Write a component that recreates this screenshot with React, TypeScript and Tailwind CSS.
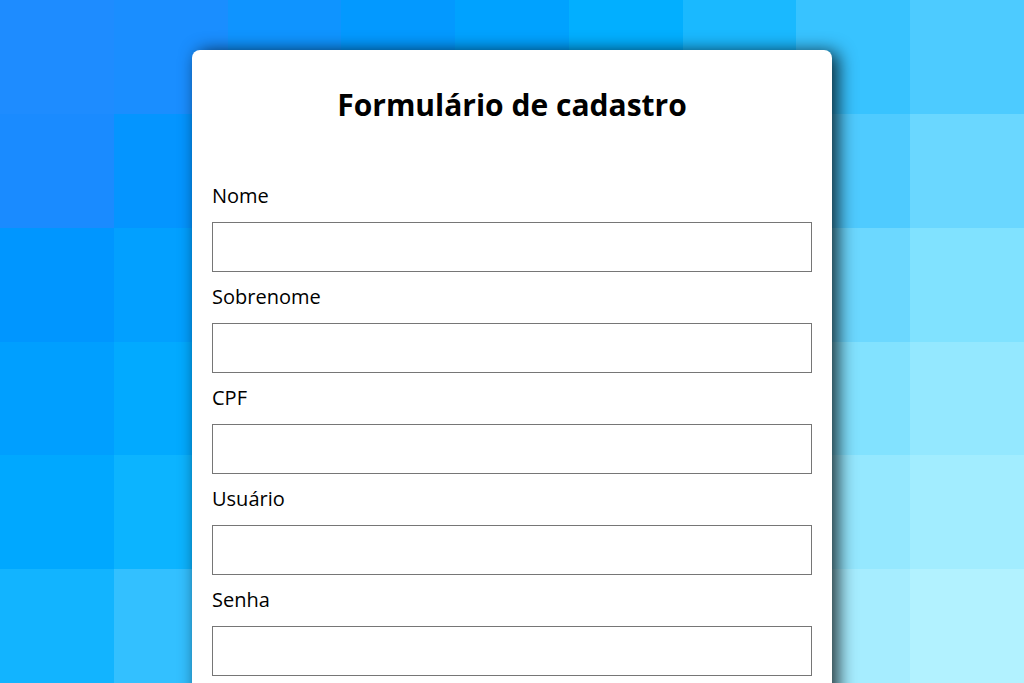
import { useState } from "react";

// background tiles, row by row (9 x 6)
const tiles = [
  "bg-[#1e8cff]", "bg-[#1a8eff]", "bg-[#0f94ff]", "bg-[#0399ff]", "bg-[#00a2ff]", "bg-[#02afff]", "bg-[#1ab9ff]", "bg-[#38c3ff]", "bg-[#4dcbff]",
  "bg-[#1a8bff]", "bg-[#0495ff]", "bg-[#019dff]", "bg-[#00a6ff]", "bg-[#06b1ff]", "bg-[#22bcff]", "bg-[#3bc5ff]", "bg-[#4fcbff]", "bg-[#6ad7ff]",
  "bg-[#0096ff]", "bg-[#02a0ff]", "bg-[#00a6ff]", "bg-[#06b1ff]", "bg-[#22bcff]", "bg-[#3bc5ff]", "bg-[#4ecbff]", "bg-[#6cd8ff]", "bg-[#80e2ff]",
  "bg-[#009fff]", "bg-[#02aaff]", "bg-[#06b1ff]", "bg-[#22bcff]", "bg-[#3bc5ff]", "bg-[#4ecbff]", "bg-[#6bd7ff]", "bg-[#82e2ff]", "bg-[#94e8ff]",
  "bg-[#00a8ff]", "bg-[#0cb4ff]", "bg-[#22bcff]", "bg-[#3bc5ff]", "bg-[#4ecbff]", "bg-[#6bd7ff]", "bg-[#81e2ff]", "bg-[#95e8ff]", "bg-[#a2edff]",
  "bg-[#12b4ff]", "bg-[#33c0ff]", "bg-[#3bc5ff]", "bg-[#4ecbff]", "bg-[#6bd7ff]", "bg-[#81e2ff]", "bg-[#94e8ff]", "bg-[#a6edff]", "bg-[#b2f2ff]",
];

const fields = [
  { id: "nome", label: "Nome", type: "text" },
  { id: "sobrenome", label: "Sobrenome", type: "text" },
  { id: "cpf", label: "CPF", type: "text" },
  { id: "usuario", label: "Usuário", type: "text" },
  { id: "senha", label: "Senha", type: "password" },
];

export default function App() {
  const [values, setValues] = useState<Record<string, string>>({});

  return (
    <main className="relative h-[683px] w-full overflow-hidden font-['Open_Sans',sans-serif] text-black">
      <div className="absolute inset-0 grid grid-cols-9 grid-rows-6">
        {tiles.map((t, i) => (
          <div key={i} className={t} />
        ))}
      </div>

      <div className="relative mx-auto mt-[50px] w-[640px] rounded-lg bg-white px-5 pt-[33px] pb-10 shadow-[6px_2px_18px_rgba(0,0,0,0.8)]">
        <h1 className="text-center text-[30px] font-bold leading-[44px]">Formulário de cadastro</h1>

        <form className="mt-[54px] flex flex-col gap-[10px]" onSubmit={(e) => e.preventDefault()}>
          {fields.map((f) => (
            <div key={f.id} className="flex flex-col">
              <label htmlFor={f.id} className="text-[20px] leading-[30px]">
                {f.label}
              </label>
              <input
                id={f.id}
                type={f.type}
                value={values[f.id] ?? ""}
                onChange={(e) => setValues({ ...values, [f.id]: e.target.value })}
                className="mt-[11px] h-[50px] w-full border border-[#767676] bg-white px-2 text-[18px] outline-none"
              />
            </div>
          ))}
        </form>
      </div>
    </main>
  );
}
